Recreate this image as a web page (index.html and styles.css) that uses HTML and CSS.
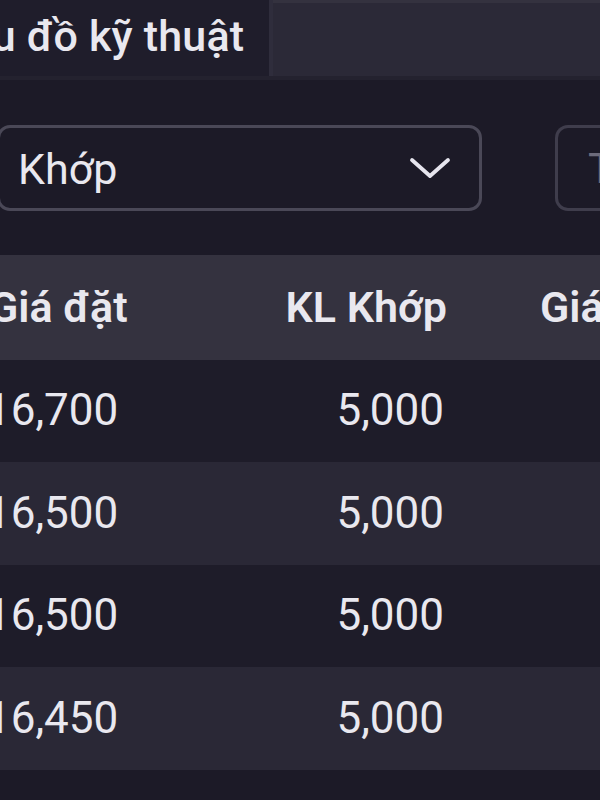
FILE: index.html
```html
<!DOCTYPE html>
<html lang="vi">
<head>
<meta charset="utf-8">
<link rel="stylesheet" href="styles.css">
</head>
<body>
<div class="page">
  <div class="tabbar">
    <div class="tab active"><span class="tab-label">Biểu đồ kỹ thuật</span></div>
    <div class="tab-rest"></div>
  </div>
  <div class="filters">
    <div class="select">
      <span class="select-value">Khớp</span>
      <svg class="chev" width="44" height="28" viewBox="0 0 44 28"><path d="M4 6 L22 22 L40 6" fill="none" stroke="#e6e5ee" stroke-width="3.8" stroke-linecap="round" stroke-linejoin="round"/></svg>
    </div>
    <div class="search"><span class="search-ph">Tìm kiếm</span></div>
  </div>
  <div class="table">
    <div class="row head">
      <div class="c1">Giá đặt</div>
      <div class="c2">KL Khớp</div>
      <div class="c3">Giá khớp</div>
    </div>
    <div class="row dark">
      <div class="c1">16,700</div>
      <div class="c2">5,000</div>
      <div class="c3"></div>
    </div>
    <div class="row light">
      <div class="c1">16,500</div>
      <div class="c2">5,000</div>
      <div class="c3"></div>
    </div>
    <div class="row dark">
      <div class="c1">16,500</div>
      <div class="c2">5,000</div>
      <div class="c3"></div>
    </div>
    <div class="row light">
      <div class="c1">16,450</div>
      <div class="c2">5,000</div>
      <div class="c3"></div>
    </div>
  </div>
</div>
</body>
</html>
```

FILE: styles.css
```css
html, body {
  margin: 0;
  padding: 0;
  background: #1c1a27;
}
body {
  width: 600px;
  height: 800px;
  overflow: hidden;
  font-family: Roboto, "Noto Sans", sans-serif;
  color: #e9e8ef;
}
.page {
  width: 600px;
  height: 800px;
  overflow: hidden;
}
.tabbar {
  display: flex;
  height: 80px;
  background: #2b2937;
  border-bottom: 4px solid #24222f;
  box-sizing: border-box;
}
.tab.active {
  width: 273px;
  flex: none;
  background: #1f1d2b;
  border-right: 4px solid #2f2d3c;
  box-sizing: border-box;
  overflow: hidden;
  display: flex;
  align-items: center;
}
.tab-label {
  margin-left: -70px;
  white-space: nowrap;
  font-size: 43px;
  font-weight: 500;
  letter-spacing: 0.2px;
  padding-bottom: 4px;
}
.tab-rest {
  flex: 1;
  border-top: 3px solid #34323f;
}
.filters {
  display: flex;
  gap: 73px;
  margin-top: 45px;
  margin-left: -3px;
  height: 86px;
}
.select {
  width: 485px;
  flex: none;
  box-sizing: border-box;
  border: 3px solid #4a4857;
  border-radius: 13px;
  display: flex;
  align-items: center;
  justify-content: space-between;
  padding: 0 27px 0 18px;
}
.select-value {
  font-size: 43px;
  font-weight: 400;
  padding-top: 2px;
}
.chev {
  display: block;
  margin-top: 0;
}
.search {
  flex: 1;
  box-sizing: border-box;
  border: 3px solid #3f3d4c;
  border-right: none;
  border-radius: 13px 0 0 13px;
  display: flex;
  align-items: center;
  padding-left: 30px;
  overflow: hidden;
  white-space: nowrap;
}
.search-ph {
  font-size: 43px;
  color: #6d6b7b;
}
.table {
  margin-top: 44px;
  margin-left: -14px;
}
.row {
  display: grid;
  grid-template-columns: 216px 245px 1fr;
  align-items: center;
  white-space: nowrap;
  font-size: 44px;
}
.row.head {
  height: 105px;
  background: #34323f;
  font-weight: 600;
  font-size: 43px;
}
.row.head .c1 {
  padding-left: 3px;
}
.row.dark {
  height: 102px;
  background: #1e1c29;
}
.row.light {
  height: 103px;
  background: #2a2836;
}
.c1 {
  padding-bottom: 2px;
}
.c2 {
  text-align: right;
  padding-bottom: 2px;
  padding-right: 3px;
}
.row.head .c2 {
  padding-right: 0;
}
.c3 {
  padding-left: 93px;
  overflow: hidden;
  padding-bottom: 2px;
}
```
